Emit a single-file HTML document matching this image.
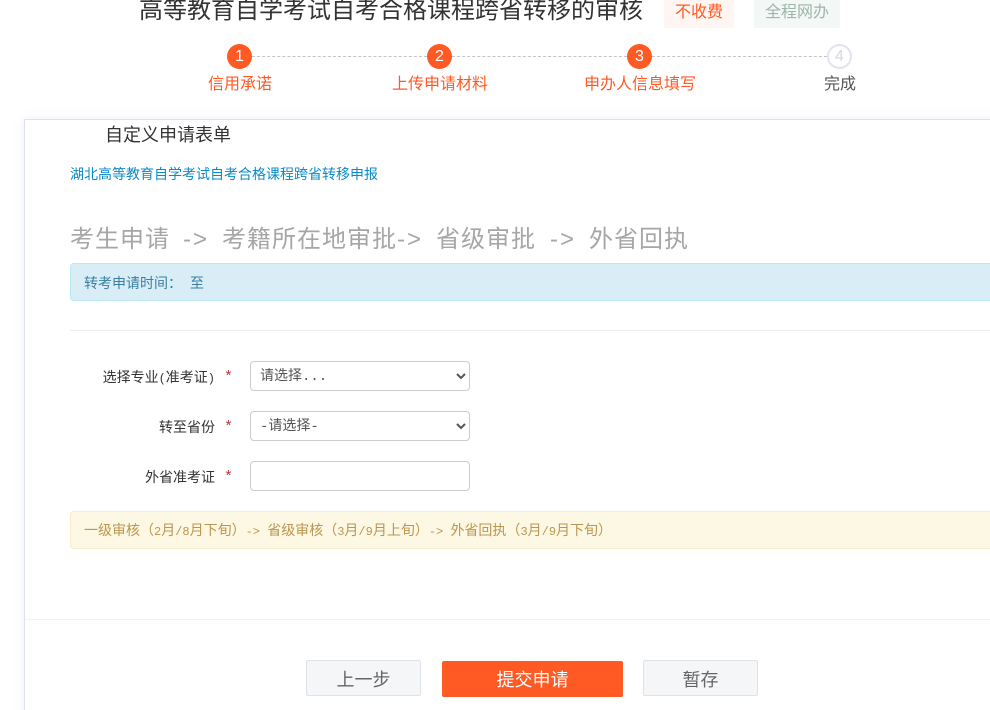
<!DOCTYPE html>
<html lang="zh">
<head>
<meta charset="utf-8">
<title>高等教育自学考试自考合格课程跨省转移的审核</title>
<style>
html,body{margin:0;padding:0;background:#fff;width:990px;height:710px;overflow:hidden;}
#w{position:relative;width:990px;height:710px;overflow:hidden;font-family:"Liberation Sans","WenQuanYi Zen Hei","Noto Sans CJK SC",sans-serif;color:#333;}
.a{position:absolute;white-space:nowrap;}
.c{text-align:center;}
.m{font-family:"Liberation Mono",monospace;font-size:12px;}
.num{width:25px;height:25px;border-radius:50%;background:#ff5a24;color:#fff;font-size:16px;line-height:25px;text-align:center;}
.dash{height:0;border-top:1px dashed #c4c4cc;top:56px;}
.st{font-size:16px;line-height:20px;top:75px;color:#ff5a24;text-align:center;}
.lab{font-size:14px;line-height:20px;color:#333;text-align:right;right:775px;}
.star{font-family:"Liberation Mono",monospace;font-size:15px;line-height:20px;color:#c0323c;left:224px;}
.ctl{left:250px;width:220px;height:30px;box-sizing:border-box;border:1px solid #ccc;border-radius:4px;background:#fff;font-size:14px;color:#555;font-family:"Liberation Mono","WenQuanYi Zen Hei",monospace;padding:2px 0 0 5px;margin:0;}
.btn{box-sizing:border-box;top:660px;width:115px;height:36px;border:1px solid #dfe2e8;background:#f5f6f8;border-radius:2px;font-size:18px;line-height:38px;text-align:center;color:#666;}
.h{font-size:24px;line-height:32px;color:#a6a6a6;top:224px;letter-spacing:1px;}
.ar{letter-spacing:2px;font-weight:normal;}
</style>
</head>
<body>
<div id="w">
<div class="a" style="left:139px;top:-5px;font-size:24px;line-height:32px;color:#333;">高等教育自学考试自考合格课程跨省转移的审核</div>
<div class="a c" style="left:664px;top:0;width:70px;height:28px;background:#fff5f2;color:#ff5a24;font-size:16px;line-height:26px;">不收费</div>
<div class="a c" style="left:754px;top:0;width:86px;height:28px;background:#f3f7f5;color:#9fb5aa;font-size:16px;line-height:26px;">全程网办</div>

<div class="a dash" style="left:252px;width:175px;"></div>
<div class="a dash" style="left:452px;width:175px;"></div>
<div class="a dash" style="left:652px;width:175px;"></div>
<div class="a num" style="left:227px;top:44px;">1</div>
<div class="a num" style="left:427px;top:44px;">2</div>
<div class="a num" style="left:627px;top:44px;">3</div>
<div class="a" style="left:827px;top:44px;width:25px;height:25px;box-sizing:border-box;border:2px solid #e2e4ec;border-radius:50%;color:#d5d8e2;font-size:16px;line-height:21px;text-align:center;">4</div>
<div class="a st" style="left:190px;width:100px;">信用承诺</div>
<div class="a st" style="left:380px;width:120px;">上传申请材料</div>
<div class="a st" style="left:580px;width:120px;">申办人信息填写</div>
<div class="a st" style="left:790px;width:100px;color:#555;">完成</div>

<div class="a" style="left:24px;top:119px;width:980px;height:600px;box-sizing:border-box;border:1px solid #dfe2ee;background:#fff;box-shadow:0 0 8px rgba(220,225,245,.55);"></div>

<div class="a" style="left:105px;top:124px;font-size:18px;line-height:22px;color:#333;">自定义申请表单</div>
<div class="a" style="left:70px;top:164px;font-size:14px;line-height:20px;color:#0a8ac8;">湖北高等教育自学考试自考合格课程跨省转移申报</div>

<div class="a h" style="left:70px;">考生申请</div>
<div class="a h ar" style="left:183px;">-&gt;</div>
<div class="a h" style="left:222px;">考籍所在地审批</div>
<div class="a h ar" style="left:397px;">-&gt;</div>
<div class="a h" style="left:436px;">省级审批</div>
<div class="a h ar" style="left:550px;">-&gt;</div>
<div class="a h" style="left:589px;">外省回执</div>

<div class="a" style="left:70px;top:263px;width:940px;height:38px;box-sizing:border-box;border:1px solid #bce8f1;border-radius:4px;background:#d9edf7;color:#3a7f9f;font-size:14px;line-height:38px;padding-left:13px;">转考申请时间：<span style="margin-left:8px;">至</span></div>

<div class="a" style="left:70px;top:330px;width:920px;height:1px;background:#eee;"></div>

<div class="a lab" style="top:367px;">选择专业<span class="m">(</span>准考证<span class="m">)</span></div>
<div class="a star" style="top:368px;">*</div>
<select class="a ctl" style="top:361px;"><option>请选择...</option></select>

<div class="a lab" style="top:417px;">转至省份</div>
<div class="a star" style="top:418px;">*</div>
<select class="a ctl" style="top:411px;"><option>-请选择-</option></select>

<div class="a lab" style="top:467px;">外省准考证</div>
<div class="a star" style="top:468px;">*</div>
<input class="a ctl" style="top:461px;" type="text">

<div class="a" style="left:70px;top:511px;width:940px;height:38px;box-sizing:border-box;border:1px solid #faebcc;border-radius:4px;background:#fcf8e3;color:#bd9550;font-size:14px;line-height:36px;padding-left:13px;">一级审核（<span class="m">2</span>月<span class="m">/8</span>月下旬）<span class="m">-&gt; </span>省级审核（<span class="m">3</span>月<span class="m">/9</span>月上旬）<span class="m">-&gt; </span>外省回执（<span class="m">3</span>月<span class="m">/9</span>月下旬）</div>

<div class="a" style="left:25px;top:619px;width:965px;height:1px;background:#f2f2f4;"></div>

<div class="a btn" style="left:306px;">上一步</div>
<div class="a" style="left:442px;top:661px;width:181px;height:36px;background:#ff5a24;border-radius:2px;color:#fff;font-size:18px;line-height:38px;text-align:center;">提交申请</div>
<div class="a btn" style="left:643px;">暂存</div>
</div>
</body>
</html>
